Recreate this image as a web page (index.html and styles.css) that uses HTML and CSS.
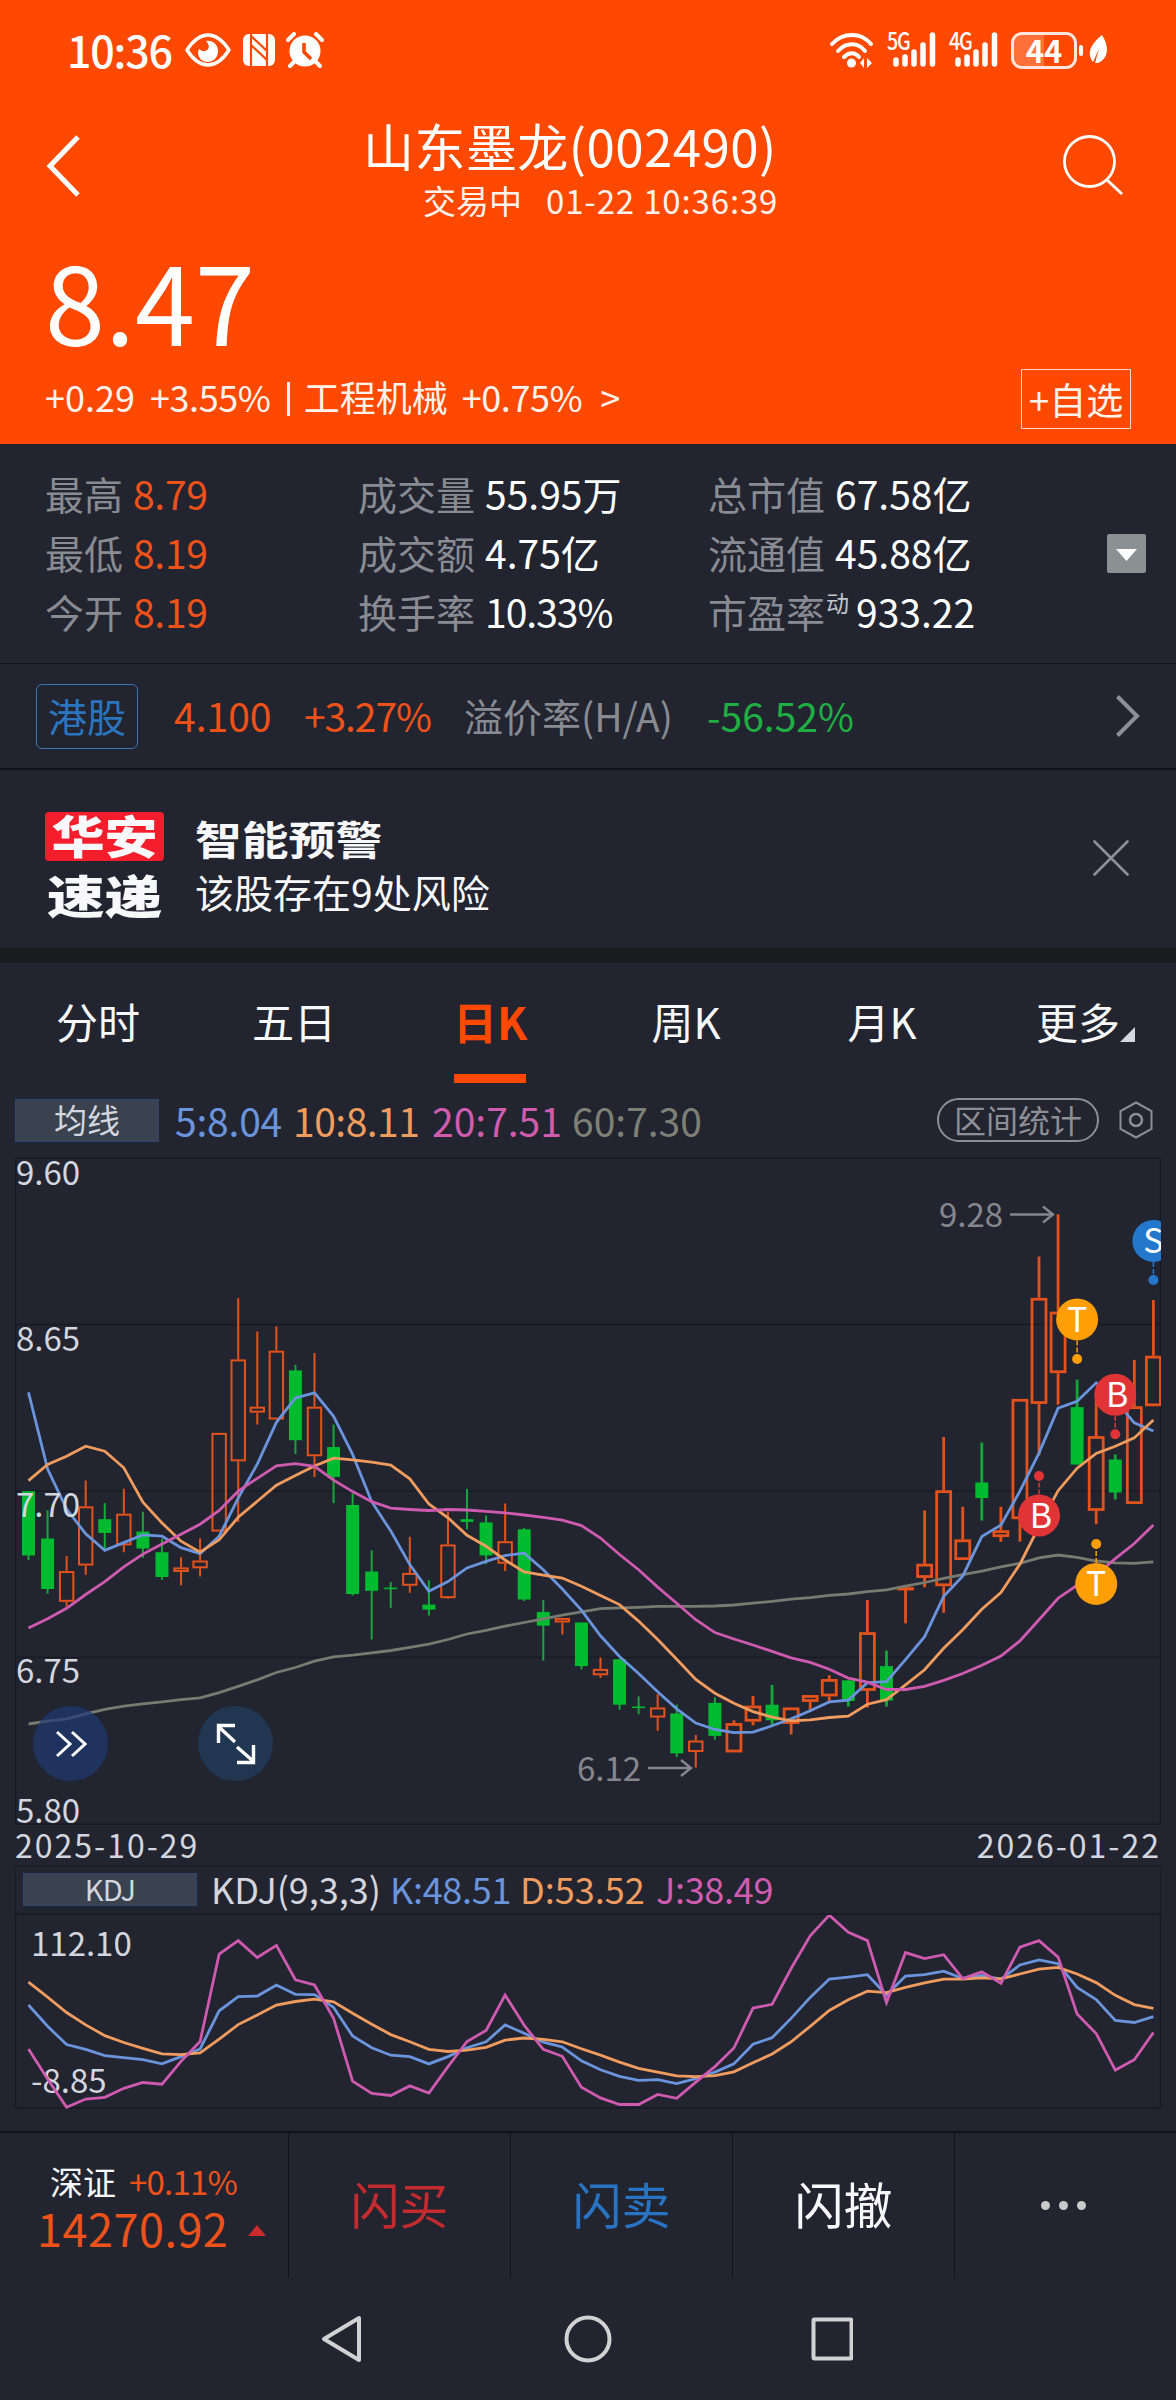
FILE: index.html
```html
<!DOCTYPE html>
<html lang="zh-CN">
<head>
    <meta charset="UTF-8">
    <meta name="viewport" content="width=device-width, initial-scale=1.0">
    <title>山东墨龙(002490)</title>
    <link rel="stylesheet" href="styles.css">
</head>
<body>
    <header class="header">
        <div class="status-bar">
            <span class="clock">10:36</span>
            <svg class="ic-eye" width="46" height="34" viewBox="0 0 46 34">
                <path d="M2 17C9 6 16 2 23 2s14 4 21 15c-7 11-14 15-21 15S9 28 2 17z" fill="none" stroke="#fff" stroke-width="3.4" stroke-linejoin="round"/>
                <path d="M21 8c7-1 12 4 12 10 0 7-5 11-10 11-6 0-10-4-10-10l1-3c2 2 6 3 8 1 3-2 2-6-1-9z" fill="#fff"/>
            </svg>
            <svg class="ic-nfc" width="32" height="34" viewBox="0 0 32 34">
                <rect x="0" y="1" width="32" height="32" rx="6" fill="#fff"/>
                <path d="M8 1v32M24 1v32M8 3l16 15M8 12l16 15" fill="none" stroke="#ff4800" stroke-width="2.2"/>
            </svg>
            <svg class="ic-alarm" width="38" height="36" viewBox="0 0 38 36">
                <circle cx="19" cy="19" r="15.5" fill="#fff"/>
                <path d="M2 8l6-6M36 8l-6-6M8 30l-4 4M30 30l4 4" stroke="#fff" stroke-width="4" stroke-linecap="round"/>
                <path d="M18 11v9l7 7" fill="none" stroke="#ff4800" stroke-width="3.6"/>
            </svg>
            <div class="status-right">
                <svg width="46" height="38" viewBox="0 0 46 38">
                    <g fill="none" stroke="#fff" stroke-width="4" stroke-linecap="round">
                        <path d="M3 13c11-12 29-12 39 0"/>
                        <path d="M9 20c8-9 20-9 27 0"/>
                        <path d="M15 26c5-5 11-5 15 0"/>
                    </g>
                    <circle cx="22.500" cy="32" r="4.500" fill="#fff"/>
                    <path d="M35 27v10l-4-5zM38 27v10l5-5z" fill="#fff"/>
                </svg>
                <div class="signal">
                    <span class="net">5G</span>
                    <svg width="44" height="36" viewBox="0 0 44 36"><path d="M3 28v4M12 25v7M21 20v12M30 13v19M39.500 3v29" stroke="#fff" stroke-width="5.500" stroke-linecap="round"/></svg>
                </div>
                <div class="signal">
                    <span class="net">4G</span>
                    <svg width="44" height="36" viewBox="0 0 44 36"><path d="M3 28v4M12 25v7M21 20v12M30 13v19M39.500 3v29" stroke="#fff" stroke-width="5.500" stroke-linecap="round"/></svg>
                </div>
                <div class="battery">44</div>
                <span class="battery-nub"></span>
                <svg class="ic-leaf" width="20" height="30" viewBox="0 0 20 30">
                    <path d="M13 0c8 12 6 24-4 28l-3 0 4-14-6 13C-3 18 2 9 13 0z" fill="#fff"/>
                </svg>
            </div>
        </div>

        <div class="title-bar">
            <svg class="back" width="36" height="66" viewBox="0 0 36 66"><path d="M32 4L4 33l28 29" fill="none" stroke="#fff" stroke-width="5"/></svg>
            <div class="title-box">
                <h1>山东墨龙(002490)</h1>
                <p><span>交易中</span><span class="time">01-22 10:36:39</span></p>
            </div>
            <svg class="search" width="62" height="62" viewBox="0 0 62 62">
                <circle cx="27.500" cy="26.500" r="25" fill="none" stroke="#fff" stroke-width="2.800"/>
                <path d="M44.500 44.500L60 59" stroke="#fff" stroke-width="3"/>
            </svg>
        </div>

        <div class="price">8.47</div>
        <div class="change-row">
            <span>+0.29</span><span class="pct">+3.55%</span><i class="bar"></i><span class="sector">工程机械</span><span class="sector-pct">+0.75%</span><span class="arrow">&gt;</span>
            <button class="add-btn">+自选</button>
        </div>
    </header>

    <section class="stats">
        <div class="stat-col col-a">
            <p>最高<b class="up">8.79</b></p>
            <p>最低<b class="up">8.19</b></p>
            <p>今开<b class="up">8.19</b></p>
        </div>
        <div class="stat-col col-b">
            <p>成交量<b>55.95万</b></p>
            <p>成交额<b>4.75亿</b></p>
            <p>换手率<b class="tight">10.33%</b></p>
        </div>
        <div class="stat-col col-c">
            <p>总市值<b>67.58亿</b></p>
            <p>流通值<b>45.88亿</b></p>
            <p class="pe">市盈率<span class="dyn">动</span><b>933.22</b></p>
        </div>
        <button class="expand-btn"><svg width="39" height="39" viewBox="0 0 39 39"><path d="M9 15h21L19.500 27z" fill="#fff"/></svg></button>
    </section>

    <section class="hk-row">
        <span class="hk-tag">港股</span>
        <span class="hk-price up">4.100</span>
        <span class="hk-pct up">+3.27%</span>
        <span class="hk-label">溢价率(H/A)</span>
        <span class="hk-premium down">-56.52%</span>
        <svg class="chevron" width="26" height="44" viewBox="0 0 26 44"><path d="M2.500 2.500L22 22 2.500 41.500" fill="none" stroke="#8d9097" stroke-width="4"/></svg>
    </section>

    <section class="alert">
        <div class="alert-logo">
            <span class="logo-top"><i>华安</i></span>
            <span class="logo-bottom"><i>速递</i></span>
        </div>
        <div class="alert-text">
            <h2>智能预警</h2>
            <p>该股存在9处风险</p>
        </div>
        <svg class="close" width="36" height="36" viewBox="0 0 36 36"><path d="M1.500 1.500l33 33M34.500 1.500l-33 33" stroke="#8d9097" stroke-width="2.600" stroke-linecap="round"/></svg>
    </section>

    <nav class="tabs">
        <span>分时</span>
        <span>五日</span>
        <span class="active">日K</span>
        <span>周K</span>
        <span>月K</span>
        <span class="more">更多</span>
    </nav>

    <section class="ma-row">
        <span class="ma-badge">均线</span>
        <span class="ma5">5:8.04</span>
        <span class="ma10">10:8.11</span>
        <span class="ma20">20:7.51</span>
        <span class="ma60">60:7.30</span>
        <span class="range-btn">区间统计</span>
        <svg class="hex" width="34" height="38" viewBox="0 0 34 38">
            <path d="M17 1.500L32.500 10v18L17 36.500 1.500 28V10z" fill="none" stroke="#8d8f95" stroke-width="2"/>
            <circle cx="17" cy="19" r="6" fill="none" stroke="#8d8f95" stroke-width="2.500"/>
        </svg>
    </section>

    <div class="k-chart">
        <svg id="kChart" width="1176" height="712" viewBox="0 0 1176 712"></svg>
        <button class="round-btn btn-next"><svg width="32" height="28" viewBox="0 0 32 28"><path d="M2 2l13 12L2 26M17 2l13 12-13 12" fill="none" stroke="#fff" stroke-width="3"/></svg></button>
        <button class="round-btn btn-full"><svg width="42" height="42" viewBox="0 0 42 42"><path d="M20 2.500H3.500V20M4 4l16 15M22 39.500h16.500V22M38 38L22 24" fill="none" stroke="#fff" stroke-width="3.400"/></svg></button>
    </div>

    <section class="kdj">
        <div class="kdj-head">
            <span class="kdj-badge">KDJ</span>
            <span class="kdj-name">KDJ(9,3,3)</span>
            <span class="ma5">K:48.51</span>
            <span class="ma10">D:53.52</span>
            <span class="ma20">J:38.49</span>
        </div>
        <svg id="kdjChart" width="1176" height="216" viewBox="0 0 1176 216"></svg>
    </section>

    <footer class="toolbar">
        <div class="index-box">
            <p class="index-top"><span>深证</span><span class="index-pct up">+0.11%</span></p>
            <p class="index-value"><span class="up">14270.92</span><i class="tri"></i></p>
        </div>
        <div class="tool buy">闪买</div>
        <div class="tool sell">闪卖</div>
        <div class="tool cancel">闪撤</div>
        <div class="tool dots"><i></i><i></i><i></i></div>
    </footer>

    <div class="sys-nav">
        <svg width="532" height="50" viewBox="0 0 532 50">
            <g fill="none" stroke="#d2d2d2" stroke-width="4" stroke-linejoin="round">
                <path d="M38 4v42L3 25z"/>
                <circle cx="267" cy="25" r="21.500"/>
                <rect x="492.500" y="5.500" width="38" height="39" rx="1"/>
            </g>
        </svg>
    </div>

    <script src="chart.js"></script>
</body>
</html>
```
FILE: styles.css
```css
* { box-sizing: border-box; }
:root {
    --bg: #222430;
    --line: #11131b;
    --brand: #ff4800;
    --up: #ee5219;
    --down: #1fae42;
    --gray: #888b92;
    --text: #f8f8fa;
}
body {
    margin: 0;
    width: 1176px;
    background: var(--bg);
    color: var(--text);
    font-family: "Noto Sans CJK SC", "Noto Sans", sans-serif;
    font-size: 39px;
}
h1, h2, p { margin: 0; font-weight: 400; }
b { font-weight: 400; }
i { font-style: normal; }
svg { display: block; flex: none; }
button {
    font-family: inherit;
    color: inherit;
    background: none;
    border: none;
    padding: 0;
}
span { white-space: nowrap; }
.up { color: var(--up); }
.down { color: var(--down); }

/* header */
.header {
    background: var(--brand);
    height: 444px;
    color: #fff;
}
.status-bar {
    display: flex;
    align-items: center;
    height: 100px;
    padding: 0 67px 0 67px;
}
.clock {
    width: 118px;
    margin-top: -3px;
    font-size: 43px;
    font-weight: 500;
    line-height: 60px;
    letter-spacing: -1.2px;
}
.ic-nfc { margin-left: 12px; }
.ic-alarm { margin-left: 11px; }
.status-right {
    display: flex;
    align-items: center;
    margin-left: auto;
}
.signal {
    position: relative;
    width: 50px;
    margin-left: 12px;
}
.signal svg { margin-left: 6px; }
.net {
    position: absolute;
    left: 0;
    top: -5px;
    font-size: 24px;
    font-weight: 500;
    line-height: 26px;
    letter-spacing: -1.5px;
    transform: scaleX(0.82);
    transform-origin: left;
}
.battery {
    width: 66px;
    height: 37px;
    margin-left: 12px;
    border: 3px solid #ffe6dc;
    border-radius: 11px;
    background: linear-gradient(90deg, #ff7038 50%, transparent 50%);
    font-size: 31px;
    font-weight: 700;
    line-height: 29px;
    text-align: center;
}
.battery-nub {
    width: 4px;
    height: 11px;
    margin: 0 6px 0 2px;
    border-radius: 2px;
    background: #fff;
}
.title-bar {
    display: flex;
    height: 140px;
    padding-left: 46px;
}
.back { margin-top: 33px; }
.title-box {
    width: 420px;
    margin-left: 281px;
}
.title-box h1 {
    font-size: 51px;
    line-height: 58px;
    margin-top: 16px;
    letter-spacing: 0.45px;
    white-space: nowrap;
}
.title-box p {
    display: flex;
    gap: 24px;
    margin: 2px 0 0 60px;
    font-size: 33px;
    line-height: 48px;
    color: #fff3ec;
}
.time { letter-spacing: 0.85px; }
.search { margin: 35px 0 0 279px; }
.price {
    height: 129px;
    padding-left: 45px;
    font-size: 108px;
    line-height: 118px;
}
.change-row {
    display: flex;
    align-items: center;
    height: 60px;
    padding: 0 45px 0 45px;
    font-size: 36px;
    color: #fff3ec;
}
.change-row span {
    line-height: 40px;
    padding-bottom: 7px;
}
.pct {
    margin-left: 15px;
    letter-spacing: -0.4px;
}
.bar {
    width: 3px;
    height: 34px;
    margin: 0 14px 0 16px;
    background: #fff3ec;
}
.sector-pct {
    margin-left: 14px;
    letter-spacing: -0.4px;
}
.arrow { margin-left: 18px; }
.add-btn {
    width: 110px;
    height: 60px;
    margin-left: auto;
    border: 1px solid #ffd9c8;
    font-size: 37px;
    line-height: 56px;
}

/* quote stats */
.stats {
    display: flex;
    height: 220px;
    padding: 20px 30px 0 45px;
    border-bottom: 1px solid var(--line);
}
.stat-col p {
    height: 59px;
    line-height: 59px;
    color: var(--gray);
    white-space: nowrap;
}
.stat-col b {
    margin-left: 10px;
    color: #fff;
}
.stat-col b.up {
    color: var(--up);
    letter-spacing: -0.3px;
}
.stat-col .tight { letter-spacing: -1px; }
.col-a { width: 313px; }
.col-b { width: 350px; }
.dyn {
    display: inline-block;
    margin-left: 1px;
    font-size: 23px;
    line-height: 24px;
    vertical-align: 16px;
    color: #c3c6cc;
}
.pe b { margin-left: 7px; }
.expand-btn {
    width: 39px;
    height: 39px;
    margin: 70px 0 0 auto;
    border-radius: 2px;
    background: #8b9093;
}

.hk-row {
    display: flex;
    align-items: center;
    height: 106px;
    padding: 0 35px 0 36px;
    border-bottom: 2px solid var(--line);
}
.hk-row span { line-height: 60px; padding-bottom: 2px; }
.hk-row .hk-tag {
    width: 102px;
    height: 65px;
    padding: 0;
    border: 1px solid #3a76b5;
    border-radius: 6px;
    color: #2b75bf;
    text-align: center;
}
.hk-price { width: 130px; margin-left: 36px; }
.hk-pct { width: 160px; letter-spacing: -1.1px; }
.hk-label { width: 243px; color: var(--gray); }
.chevron { margin-left: auto; }

.alert {
    display: flex;
    height: 193px;
    padding: 42px 47px 0 45px;
    border-bottom: 15px solid #1b1c20;
}
.alert-logo { width: 119px; }
.logo-top, .logo-bottom {
    display: block;
    height: 49px;
    font-size: 45px;
    font-weight: 900;
    line-height: 46px;
    text-align: center;
}
.logo-top {
    background: #f31d2c;
    border-radius: 4px;
}
.logo-bottom { margin-top: 11px; }
.alert-logo i {
    display: block;
    transform: scaleX(1.18);
}
.alert-logo .logo-bottom i { transform: scaleX(1.28); }
.alert-text { margin-left: 31px; }
.alert-text h2 {
    font-size: 40px;
    font-weight: 700;
    line-height: 52px;
    transform: scaleX(1.17);
    transform-origin: left;
}
.alert-text p { line-height: 54px; }
.close { margin: 28px 0 0 auto; }

/* period tabs */
.tabs {
    display: grid;
    grid-template-columns: repeat(6, 1fr);
    height: 129px;
}
.tabs span {
    position: relative;
    font-size: 42px;
    line-height: 116px;
    text-align: center;
}
.tabs .active {
    color: var(--brand);
    font-size: 44px;
    font-weight: 700;
}
.tabs .active::after {
    content: "";
    position: absolute;
    left: 62px;
    top: 111px;
    width: 72px;
    height: 9px;
    background: var(--brand);
}
.tabs .more::after {
    content: "";
    position: absolute;
    right: 41px;
    top: 64px;
    border-left: 15px solid transparent;
    border-bottom: 15px solid #d3d8e0;
}

.ma5 { color: #6a94dc; }
.ma10 { color: #f09c5f; }
.ma20 { color: #d05cb0; }
.ma60 { color: #7d8075; }
.ma-row {
    display: flex;
    align-items: center;
    height: 58px;
    padding: 0 23px 2px 15px;
}
.ma-badge, .kdj-badge {
    background: #3a424f;
    border: 1px solid #2e4672;
    color: #d3d6de;
    text-align: center;
}
.ma-badge {
    width: 144px;
    height: 43px;
    margin-right: 16px;
    font-size: 33px;
    line-height: 38px;
}
.ma-row .ma5 { width: 118px; letter-spacing: -0.2px; }
.ma-row .ma10 { width: 139px; letter-spacing: -0.5px; }
.ma-row .ma20 { width: 140px; }
.range-btn {
    width: 162px;
    height: 44px;
    margin-left: auto;
    border: 2px solid #8d8f95;
    border-radius: 22px;
    color: #8d8f95;
    font-size: 32px;
    line-height: 38px;
    text-align: center;
}
.hex { margin-left: 20px; }

/* charts */
.k-chart {
    position: relative;
    height: 712px;
}
.axis { font-size: 33px; fill: #d3d6de; }
.mark { font-size: 33px; fill: #85878d; }
.date { font-size: 32px; fill: #d3d6de; letter-spacing: 2px; }
.badge-letter {
    font-size: 34px;
    fill: #fff;
    text-anchor: middle;
}
.round-btn {
    position: absolute;
    top: 556px;
    width: 75px;
    height: 75px;
    border-radius: 50%;
    display: flex;
    align-items: center;
    justify-content: center;
}
.btn-next { left: 33px; background: rgba(32, 58, 116, 0.7); }
.btn-full { left: 198px; background: rgba(34, 62, 92, 0.75); }

.kdj-head {
    display: flex;
    align-items: center;
    height: 49px;
    margin: 4px 15px 0;
    padding-left: 7px;
    border: 1px solid #191b25;
    border-bottom: 2px solid #191b25;
    font-size: 36px;
}
.kdj-head span { line-height: 42px; padding-bottom: 4px; }
.kdj-head .kdj-badge {
    width: 174px;
    height: 33px;
    margin: 0 14px 2px 0;
    padding: 0;
    font-size: 29px;
    line-height: 29px;
    letter-spacing: -0.8px;
}
.kdj-name { width: 179px; color: #d3d6de; }
.kdj-head .ma5 { width: 130px; letter-spacing: -0.3px; }
.kdj-head .ma10 { width: 136px; }
.kdj-head .ma20 { letter-spacing: -0.3px; }

/* bottom bar */
.toolbar {
    display: grid;
    grid-template-columns: 289px 222px 222px 222px 221px;
    height: 147px;
    border-top: 2px solid var(--line);
}
.index-box {
    border-right: 1px solid var(--line);
    padding-top: 24px;
}
.index-top {
    display: flex;
    gap: 13px;
    padding-left: 50px;
    font-size: 33px;
    line-height: 49px;
}
.index-pct { letter-spacing: -0.8px; }
.index-value {
    display: flex;
    align-items: center;
    padding-left: 37px;
    font-size: 45px;
    line-height: 44px;
    letter-spacing: 0.5px;
}
.tri {
    margin: 5px 0 0 20px;
    border: 9px solid transparent;
    border-top: 0;
    border-bottom: 11px solid #cc2b2b;
}
.tool {
    border-right: 1px solid var(--line);
    font-size: 49px;
    line-height: 139px;
    text-align: center;
}
.tool:last-child { border: none; }
.buy { color: #c42b2f; }
.sell { color: #2874c3; }
.dots {
    display: flex;
    align-items: center;
    justify-content: center;
    gap: 9px;
    padding-right: 4px;
}
.dots i {
    width: 9px;
    height: 9px;
    border-radius: 50%;
    background: #cacaca;
}
.sys-nav {
    display: flex;
    height: 122px;
    padding: 36px 0 0 321px;
}
```
FILE: chart.js
```js
const COLORS = {
    up: "#e4521c", down: "#00ba2f",
    blue: "#6a94dc", orange: "#f09c5f", pink: "#cf5bb0", olive: "#777b70",
    grid: "#171923"
};
const STEP = 19.066;
const X0 = 28.5;
const xAt = i => X0 + i * STEP;

// [type, body top, body bottom, high, low] on the chart's level scale
const candles = [
    ["g",743,883,743,893],["g",846,956,785,966],["r",917,984,884,994],["r",776,905,720,925],["g",804,834,769,872],
    ["r",792,861,738,876],["g",831,868,788,888],["g",876,930,847,936],["r",909,919,887,948],["r",894,911,846,929],
    ["r",616,831,616,831],["r",456,678,323,810],["r",559,572,395,598],["r",437,587,384,587],["g",480,632,468,662],
    ["r",559,667,442,712],["g",647,712,598,769],["g",773,967,748,970],["g",918,960,872,1066],["g",953,956,941,997],
    ["r",921,949,842,964],["g",990,1001,937,1014],["r",859,976,788,978],["g",804,810,738,826],["g",811,883,796,902],
    ["r",852,901,770,917],["g",826,979,823,982],["g",1006,1036,980,1112],["r",1019,1029,1019,1055],["g",1029,1124,1029,1131],
    ["r",1130,1144,1105,1150],["g",1109,1208,1109,1219],["g",1212,1215,1190,1229],["r",1214,1236,1185,1265],["g",1227,1314,1208,1322],
    ["r",1286,1311,1274,1345],["g",1204,1276,1192,1284],["r",1248,1312,1242,1312],["r",1210,1245,1189,1253],["g",1208,1242,1165,1253],
    ["r",1214,1250,1214,1273],["r",1187,1202,1187,1224],["r",1152,1190,1144,1202],["g",1155,1200,1155,1212],["r",1050,1178,980,1214],
    ["g",1124,1199,1090,1212],["r",952,956,952,1031],["r",901,932,785,952],["r",741,950,625,1008],["r",848,893,777,893],
    ["g",724,758,637,807],["r",828,843,777,853],["r",542,804,542,853],["r",322,553,232,665],["r",352,486,140,555],
    ["g",560,685,500,685],["r",623,786,540,815],["g",674,746,663,761],["r",558,771,457,771],["r",448,558,327,558]
];
const ma5 = [528,695,782,836,872,855,838,841,866,879,841,758,684,593,540,529,580,663,766,830,903,961,940,910,896,883,878,914,956,1002,1058,1103,1140,1180,1217,1248,1262,1269,1268,1254,1239,1221,1202,1198,1160,1158,1110,1060,972,928,842,817,743,660,562,547,507,545,594,612];
const ma10 = [720,685,667,645,656,692,767,812,852,876,849,800,765,730,709,688,671,675,680,686,716,771,801,839,863,893,919,926,932,950,970,990,1026,1066,1109,1153,1183,1205,1223,1235,1243,1241,1236,1233,1207,1197,1165,1132,1085,1045,1000,964,902,820,742,693,661,645,627,588];
const ma20 = [1041,1021,998,968,940,908,880,858,837,815,785,743,715,688,683,689,719,744,766,780,783,785,783,784,787,790,795,800,806,818,845,881,914,952,987,1023,1051,1065,1078,1092,1106,1116,1131,1150,1159,1175,1175,1168,1155,1140,1122,1102,1069,1023,976,948,925,890,857,817];
const ma60 = [1250,1244,1239,1228,1218,1211,1206,1202,1197,1193,1182,1168,1154,1138,1127,1113,1104,1100,1095,1090,1083,1076,1066,1054,1046,1037,1029,1021,1013,1006,999,997,996,994,994,994,993,991,987,983,978,975,970,967,962,958,950,942,933,925,917,908,900,888,882,887,895,899,900,897];

const kLine = [421,483,536,550,568,574,580,592,571,549,438,397,395,363,390,391,428,511,545,567,571,592,571,545,528,479,503,529,543,583,609,628,640,638,649,635,616,592,535,516,460,399,346,340,333,392,337,333,323,344,335,346,305,290,301,370,405,466,472,455];
const dLine = [355,398,443,479,510,530,547,563,565,560,520,478,450,421,411,404,412,445,477,507,528,550,556,552,544,523,517,521,528,548,567,587,605,616,627,629,626,615,589,563,528,483,437,406,381,385,370,357,346,346,342,345,331,317,312,331,356,393,420,431];
const jLine = [549,636,718,694,689,663,646,651,585,527,273,234,283,248,348,363,460,642,678,684,656,677,600,527,495,392,480,550,570,660,691,710,710,681,692,645,600,546,430,419,315,220,160,210,234,414,269,286,275,344,325,358,253,234,282,447,504,610,580,501];

// trade markers: [index, letter, badge level, dot level, colour]
const trades = [
    [59, "S", 198, 283, "#2378cc"],
    [55, "T", 369, 455, "#ff9f05"],
    [57, "B", 533, 619, "#e03436"],
    [53, "B", 796, 710, "#e03436"],
    [56, "T", 945, 858, "#ff9f05"]
];

const yK = v => v / 2.1778;
const yKdj = v => v / 2.904 - 55;

function polyline(values, y, color) {
    const pts = values.map((v, i) => xAt(i).toFixed(1) + "," + y(v).toFixed(1)).join(" ");
    return `<polyline points="${pts}" fill="none" stroke="${color}" stroke-width="2.8"/>`;
}

function hLine(y, w = 1.3) {
    return `<path d="M15.5 ${y}H1160.5" stroke="${COLORS.grid}" stroke-width="${w}"/>`;
}

function drawCandle([type, top, bottom, high, low], i) {
    const x = xAt(i), t = yK(top), b = yK(bottom), h = yK(high), l = yK(low);
    const w = i > 36 ? 2.8 : 2;
    if (type === "g") {
        return `<path d="M${x} ${h}V${l}" stroke="#16a73a" stroke-width="${w}"/>
            <rect x="${x - 6.5}" y="${t}" width="13" height="${Math.max(b - t, 1.6)}" fill="${COLORS.down}"/>`;
    }
    const half = i > 36 ? 7 : 6.7;
    return `<g fill="none" stroke="${COLORS.up}" stroke-width="${w}">
        <path d="M${x} ${h}V${t}M${x} ${b}V${l}"/>
        <rect x="${x - half}" y="${t + w / 2}" width="${half * 2}" height="${Math.max(b - t - w, 0.5)}"/></g>`;
}

function drawTrade([i, letter, badge, dot, color]) {
    const x = xAt(i), y = yK(badge), d = yK(dot);
    const dx = letter === "B" ? 2 : 0;
    return `<path d="M${x} ${y}V${d}" stroke="${color}" stroke-width="1.5" stroke-dasharray="5 2"/>
        <circle cx="${x}" cy="${d}" r="5" fill="${color}"/>
        <circle cx="${x}" cy="${y}" r="21" fill="${color}"/>
        <text class="badge-letter" x="${x + dx}" y="${y + 12.5}">${letter}</text>`;
}

function drawKChart() {
    const levels = [18, 380, 743, 1105, 1468];
    let out = `<defs><clipPath id="plot"><rect x="15" y="0" width="1146" height="712"/></clipPath></defs>`;
    out += levels.map(v => hLine(yK(v).toFixed(1))).join("");
    out += `<path d="M15.5 8V674M1160.5 8V674" stroke="${COLORS.grid}" stroke-width="1.3"/>`;
    out += `<g clip-path="url(#plot)">`;
    out += candles.map(drawCandle).join("");
    out += polyline(ma60, yK, COLORS.olive) + polyline(ma5, yK, COLORS.blue);
    out += polyline(ma10, yK, COLORS.orange) + polyline(ma20, yK, COLORS.pink);
    out += trades.map(drawTrade).join("");
    out += `</g>`;
    const labels = [["9.60", 35], ["8.65", 201], ["7.70", 367], ["6.75", 533], ["5.80", 673]];
    out += labels.map(([t, y]) => `<text class="axis" x="16" y="${y}">${t}</text>`).join("");
    out += `<text class="date" x="15" y="708">2025-10-29</text>`;
    out += `<text class="date" x="1161" y="708" text-anchor="end">2026-01-22</text>`;
    out += `<text class="mark" x="939" y="77">9.28</text><text class="mark" x="577" y="631">6.12</text>`;
    out += `<path d="M1010 64.500H1052M1043 56.500l10 8-10 8M648 618H690M681 610l10 8-10 8" fill="none" stroke="#85878d" stroke-width="2.4"/>`;
    document.getElementById("kChart").innerHTML = out;
}

function drawKdj() {
    let out = `<path d="M15.500 0V193H1160.500V0" fill="none" stroke="${COLORS.grid}" stroke-width="1.3"/>`;
    out += `<text class="axis" x="31" y="41">112.10</text><text class="axis" x="31" y="178">-8.85</text>`;
    out += polyline(kLine, yKdj, COLORS.blue) + polyline(dLine, yKdj, COLORS.orange) + polyline(jLine, yKdj, COLORS.pink);
    document.getElementById("kdjChart").innerHTML = out;
}

drawKChart();
drawKdj();
```
